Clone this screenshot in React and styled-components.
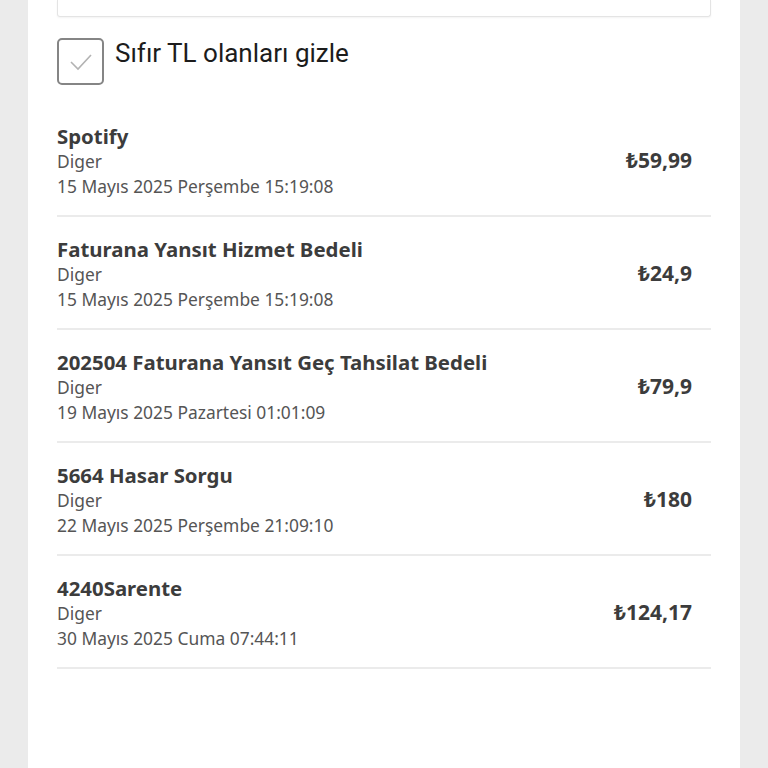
import React from "react"
import styled, { createGlobalStyle } from "styled-components"

const GlobalStyle = createGlobalStyle`
  html, body {
    margin: 0;
    padding: 0;
    background: #ebebeb;
    height: 100%;
  }
  #root {
    min-height: 100%;
  }
`

const items = [
  { title: "Spotify", type: "Diger", date: "15 Mayıs 2025 Perşembe 15:19:08", amount: "₺59,99" },
  { title: "Faturana Yansıt Hizmet Bedeli", type: "Diger", date: "15 Mayıs 2025 Perşembe 15:19:08", amount: "₺24,9" },
  { title: "202504 Faturana Yansıt Geç Tahsilat Bedeli", type: "Diger", date: "19 Mayıs 2025 Pazartesi 01:01:09", amount: "₺79,9" },
  { title: "5664 Hasar Sorgu", type: "Diger", date: "22 Mayıs 2025 Perşembe 21:09:10", amount: "₺180" },
  { title: "4240Sarente", type: "Diger", date: "30 Mayıs 2025 Cuma 07:44:11", amount: "₺124,17" }
]

export default function App() {
  return (
    <>
      <GlobalStyle />
      <Panel>
        <SearchBox />
        <FilterRow>
          <CheckBox>
            <svg width="26" height="20" viewBox="0 0 26 20">
              <path d="M3 10 L10 17 L23 3" fill="none" stroke="#b3b3b3" strokeWidth="1.6" />
            </svg>
          </CheckBox>
          <FilterLabel>Sıfır TL olanları gizle</FilterLabel>
        </FilterRow>
        <List>
          {items.map((item, i) => (
            <Row key={i}>
              <Info>
                <Title>{item.title}</Title>
                <Sub>{item.type}</Sub>
                <Sub>{item.date}</Sub>
              </Info>
              <Amount>{item.amount}</Amount>
            </Row>
          ))}
        </List>
      </Panel>
    </>
  )
}

const Panel = styled.div`
  margin: 0 28px;
  min-height: 768px;
  background: #fff;
  padding: 0 29px;
  box-sizing: border-box;
`
const SearchBox = styled.div`
  height: 16px;
  border: 1px solid #e4e4e4;
  border-top: none;
  border-radius: 0 0 3px 3px;
  box-shadow: 0 1px 2px rgba(0, 0, 0, 0.05);
`
const FilterRow = styled.div`
  display: flex;
  align-items: flex-start;
  margin-top: 21px;
`
const CheckBox = styled.div`
  width: 43px;
  height: 43px;
  border: 2px solid #858585;
  border-radius: 5px;
  display: flex;
  align-items: center;
  justify-content: center;
  flex-shrink: 0;
`
const FilterLabel = styled.span`
  margin-left: 11px;
  font-family: Roboto, sans-serif;
  font-size: 26px;
  line-height: 31px;
  color: #1c1c1c;
`
const List = styled.div`
  margin-top: 19px;
`
const Row = styled.div`
  display: flex;
  align-items: center;
  justify-content: space-between;
  padding: 20px 19px 16px 0;
  border-bottom: 2px solid #ebebeb;
  font-family: "Noto Sans", sans-serif;
`
const Info = styled.div`
  display: flex;
  flex-direction: column;
`
const Title = styled.div`
  font-size: 20.4px;
  font-weight: 700;
  line-height: 25px;
  color: #3c3c3c;
`
const Sub = styled.div`
  font-size: 17.4px;
  line-height: 25px;
  color: #555;
`
const Amount = styled.div`
  font-size: 21px;
  font-weight: 700;
  color: #3c3c3c;
  margin-bottom: 4px;
`
